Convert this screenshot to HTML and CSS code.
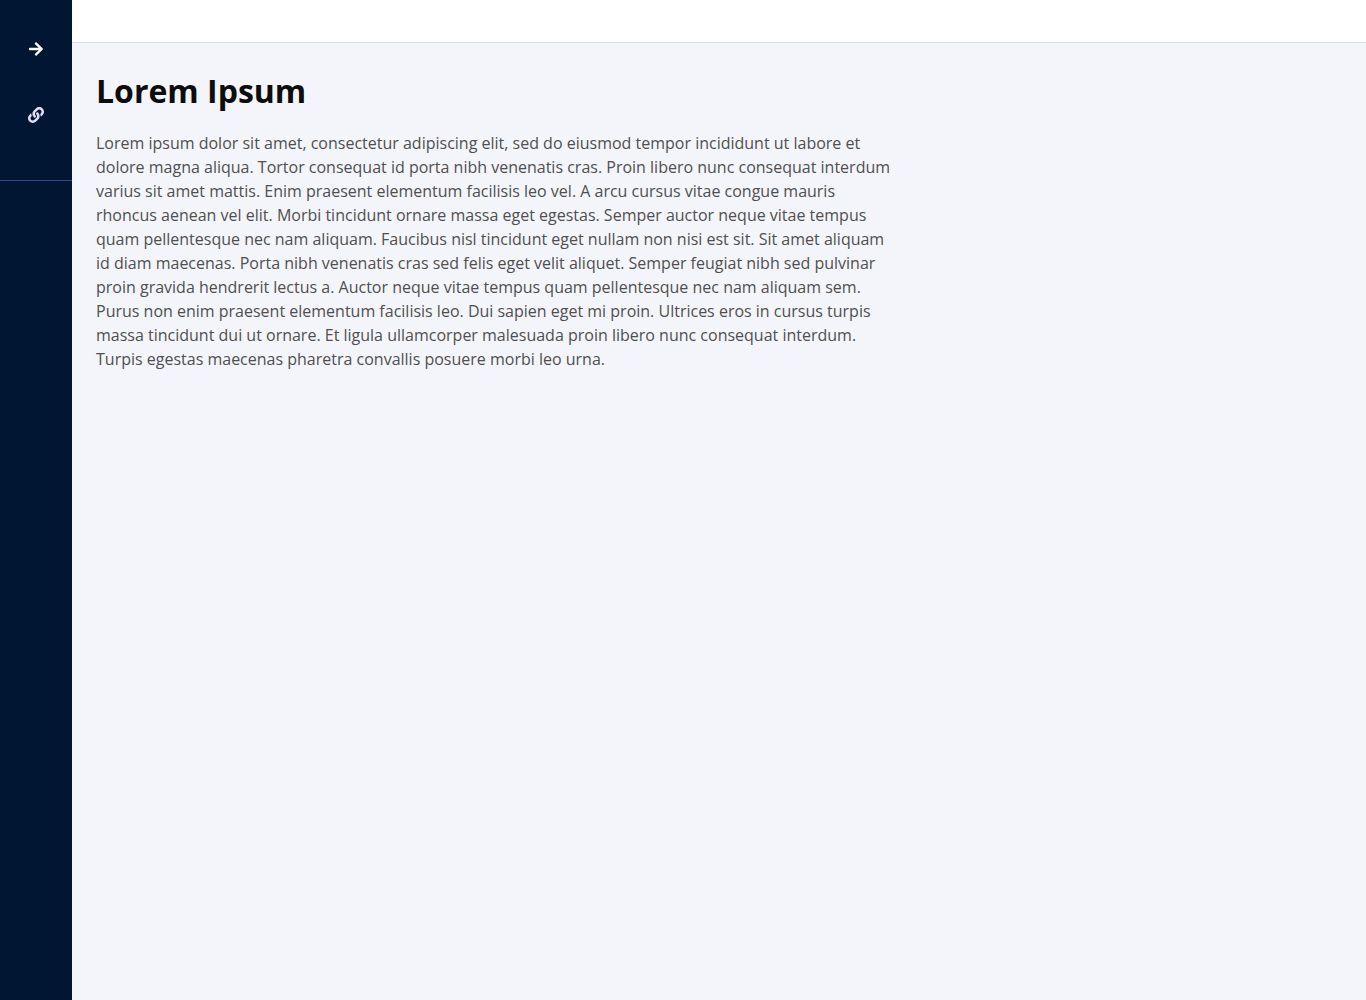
FILE: index.html
```html
<!DOCTYPE html>
<html lang="en">
<head>
<meta charset="utf-8">
<title>Lorem Ipsum</title>
<link rel="stylesheet" href="styles.css">
</head>
<body>
<div class="app">
  <nav class="sidebar">
    <div class="sidebar-group">
      <a class="nav-item nav-item-toggle" aria-label="Expand">
        <svg class="icon-arrow" viewBox="0 0 448 512"><path fill="currentColor" d="M190.500 66.900l22.200-22.200c9.400-9.400 24.600-9.400 33.900 0L441 239c9.400 9.400 9.400 24.600 0 33.900L246.600 467.300c-9.400 9.400-24.600 9.400-33.900 0l-22.200-22.200c-9.500-9.500-9.300-25 .4-34.300L311.400 296H24c-13.300 0-24-10.700-24-24v-32c0-13.300 10.700-24 24-24h287.400L190.900 101.200c-9.800-9.300-10-24.800-.4-34.300z"/></svg>
      </a>
      <a class="nav-item" aria-label="Link">
        <svg class="icon-link" viewBox="0 0 512 512"><path fill="currentColor" d="M326.612 185.391c59.747 59.809 58.927 155.698.36 214.590-.11.120-.240.250-.36.370l-67.200 67.200c-59.270 59.270-155.699 59.262-214.960 0-59.270-59.260-59.270-155.700 0-214.960l37.106-37.106c9.840-9.840 26.786-3.300 27.294 10.606.648 17.722 3.826 35.527 9.690 52.721 1.986 5.822.567 12.262-3.783 16.612l-13.087 13.087c-28.026 28.026-28.905 73.660-1.155 101.960 28.024 28.579 74.086 28.749 102.325.510l67.200-67.190c28.191-28.191 28.073-73.757 0-101.830-3.701-3.694-7.429-6.564-10.341-8.569a16.037 16.037 0 0 1-6.947-12.606c-.396-10.567 3.348-21.456 11.698-29.806l21.054-21.055c5.521-5.521 14.182-6.199 20.584-1.731a152.482 152.482 0 0 1 20.522 17.197zM467.547 44.449c-59.261-59.262-155.690-59.270-214.960 0l-67.200 67.200c-.120.120-.250.250-.360.370-58.566 58.892-59.387 154.781.360 214.590a152.454 152.454 0 0 0 20.521 17.196c6.402 4.468 15.064 3.789 20.584-1.731l21.054-21.055c8.350-8.350 12.094-19.239 11.698-29.806a16.037 16.037 0 0 0-6.947-12.606c-2.912-2.005-6.640-4.875-10.341-8.569-28.073-28.073-28.191-73.639 0-101.830l67.200-67.190c28.239-28.239 74.300-28.069 102.325.510 27.750 28.300 26.872 73.934-1.155 101.960l-13.087 13.087c-4.350 4.350-5.769 10.790-3.783 16.612 5.864 17.194 9.042 34.999 9.690 52.721.509 13.906 17.454 20.446 27.294 10.606l37.106-37.106c59.271-59.259 59.271-155.699.001-214.959z"/></svg>
      </a>
    </div>
  </nav>
  <div class="main">
    <header class="topbar"></header>
    <main class="content">
      <h1 class="title">Lorem Ipsum</h1>
      <p class="text">Lorem ipsum dolor sit amet, consectetur adipiscing elit, sed do eiusmod tempor incididunt ut labore et dolore magna aliqua. Tortor consequat id porta nibh venenatis cras. Proin libero nunc consequat interdum varius sit amet mattis. Enim praesent elementum facilisis leo vel. A arcu cursus vitae congue mauris rhoncus aenean vel elit. Morbi tincidunt ornare massa eget egestas. Semper auctor neque vitae tempus quam pellentesque nec nam aliquam. Faucibus nisl tincidunt eget nullam non nisi est sit. Sit amet aliquam id diam maecenas. Porta nibh venenatis cras sed felis eget velit aliquet. Semper feugiat nibh sed pulvinar proin gravida hendrerit lectus a. Auctor neque vitae tempus quam pellentesque nec nam aliquam sem. Purus non enim praesent elementum facilisis leo. Dui sapien eget mi proin. Ultrices eros in cursus turpis massa tincidunt dui ut ornare. Et ligula ullamcorper malesuada proin libero nunc consequat interdum. Turpis egestas maecenas pharetra convallis posuere morbi leo urna.</p>
    </main>
  </div>
</div>
</body>
</html>
```
FILE: styles.css
```css
* { box-sizing: border-box; }
body { margin: 0; font-family: "Open Sans", sans-serif; background: #f4f5fb; }
.app { display: flex; min-height: 100vh; }
.sidebar { width: 72px; flex: none; background: #001632; }
.sidebar-group { height: 181px; padding-top: 16px; border-bottom: 1px solid #3a4790; }
.nav-item { display: flex; align-items: center; justify-content: center; height: 66px; color: #dcdff5; }
.nav-item-toggle { color: #fff; }
.icon-arrow { width: 14px; height: 16px; }
.icon-link { width: 16px; height: 16px; }
.main { flex: 1; min-width: 0; }
.topbar { height: 43px; background: #fff; border-bottom: 1px solid #d8d9f5; }
.content { padding: 24px; }
.title { margin: 0 0 16px; font-size: 32px; line-height: 48px; font-weight: 700; color: #0d0d0d; }
.text { margin: 0; max-width: 800px; font-size: 16px; line-height: 24px; color: #4f4f4f; }
```
